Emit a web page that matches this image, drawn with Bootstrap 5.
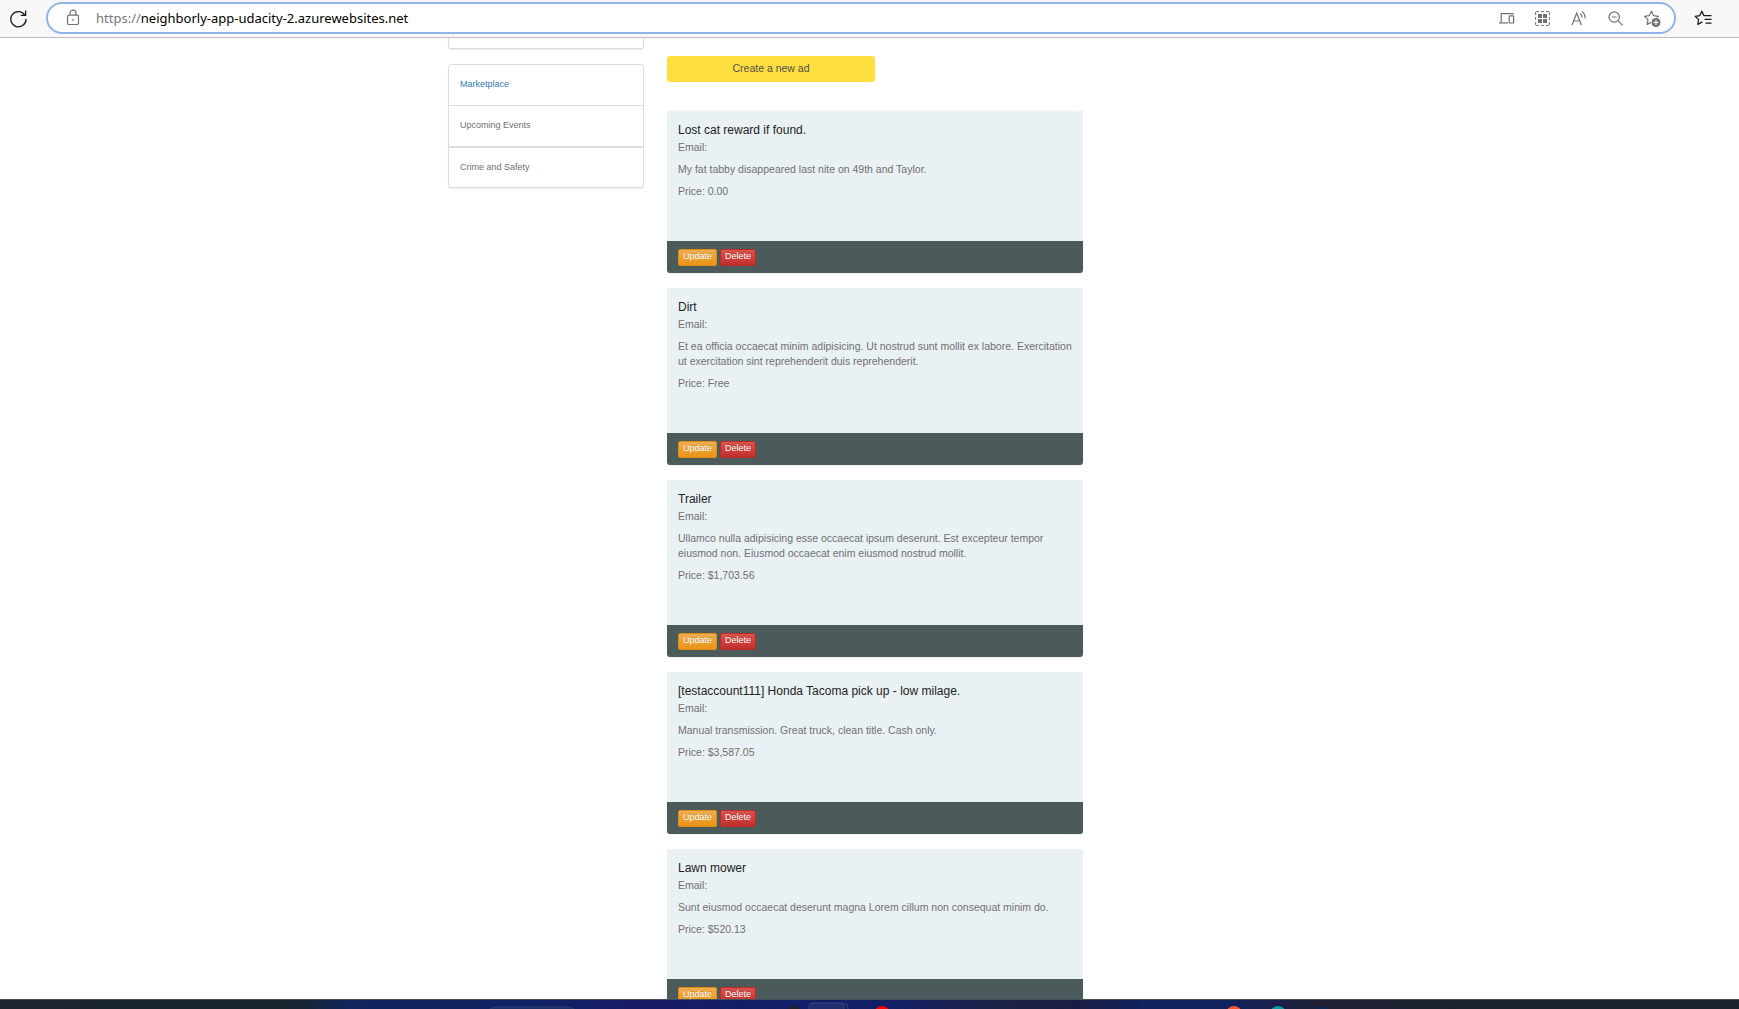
<!DOCTYPE html>
<html lang="en">
<head>
<meta charset="utf-8">
<meta name="viewport" content="width=device-width, initial-scale=1">
<title>Neighborly</title>
<link href="https://cdn.jsdelivr.net/npm/bootstrap@5.3.0/dist/css/bootstrap.min.css" rel="stylesheet">
<style>
body{font:12px/15px "Liberation Sans",Arial,sans-serif;color:#707070;background:#fff}
.toolbar{height:38px;background:#f7f7f7;border-bottom:1px solid #bdbdbd;padding:2px 26px 3px 8px}
.icon-btn{border:0;background:none;padding:0;line-height:0;color:#707070}
.icon-btn.dark{color:#1b1b1b}
.address{height:32px;border:2px solid #8fb3ea;border-radius:16px;background:#fff;padding:0 12px 0 17px;margin-left:18px;margin-right:18px}
.address-url{font:13px/20px "Noto Sans","Open Sans",sans-serif;color:#000;margin-left:15px}
.address-url span{color:#767676}
.address-tools{gap:19px}
.viewport-pane{min-height:0}
.page-wrap{max-width:843px;gap:23px}
.side{width:196px}
.main-col{width:416px;padding-top:18px}
.side-group{border:1px solid #ddd;border-radius:3px;box-shadow:0 1px 1px rgba(0,0,0,.08)}
.side-prev{height:11px;border-top:0;border-radius:0 0 3px 3px;margin-bottom:15px}
.side-link{display:block;height:41px;padding:12px 11px;font-size:9px;line-height:15px;color:#707070;text-decoration:none;border-bottom:1px solid #ddd}
.side-link.active{color:#337ab7}
.side-link:nth-child(2){height:42px;border-bottom-width:2px}
.side-link:last-child{height:39px;border-bottom:0}
.btn-create{height:26px;width:50%;border:0;border-radius:3px;background:#ffde3f;color:#4f4f4f;line-height:15px;padding:0 0 2px;margin-bottom:29px}
.ad{margin-bottom:15px;border-radius:0 0 3px 3px;overflow:hidden;box-shadow:0 1px 1px rgba(0,0,0,.06)}
.ad-body{background:#e9f1f5;padding:11px 10px 42px 11px}
.ad-body h2{font-size:12px;line-height:16px;margin:0 0 2px;color:#222;font-weight:400}
.ad-body p{margin:0 0 7px}
.ad-body p:last-child{margin:0}
.ad-foot{background:#4b5b5b;height:32px;padding:8px 11px;gap:3px}
.ad-foot button{height:17px;font-size:9px;line-height:11px;border-radius:2px;padding:0 4px 2px;color:#fff;text-shadow:0 -1px 0 rgba(0,0,0,.2)}
.b-upd{background:linear-gradient(#f0ad4e,#eb9316);border:1px solid #e38d13}
.b-del{background:linear-gradient(#d9534f,#c12e2a);border:1px solid #b92c28}
.taskbar{height:10px;border-top:1px solid #42505e;background:linear-gradient(90deg,#1c2430 0,#17242f 17%,#10265c 20%,#102365 31%,#181a68 37%,#101f68 45%,#111f66 51%,#1b2145 57%,#1b1c45 62%,#10225f 66%,#10225c 71%,#201f33 76%,#19222e 84%,#1c222c)}
.taskbar svg{display:block;width:100%}
</style>
<script src="https://cdn.jsdelivr.net/npm/bootstrap@5.3.0/dist/js/bootstrap.bundle.min.js"></script>
</head>
<body class="vh-100 d-flex flex-column overflow-hidden">
<header class="toolbar d-flex align-items-center flex-shrink-0">
  <button class="icon-btn dark" aria-label="Refresh"><svg width="20" height="20" viewBox="0 0 20 20" fill="none" stroke="currentColor" stroke-width="1.3"><path d="M16.7 7A7.6 7.6 0 1 0 18 11M17.6 2.5V7.3H12.8"/></svg></button>
  <div class="address d-flex align-items-center flex-grow-1">
    <button class="icon-btn" aria-label="Site information"><svg width="16" height="18" viewBox="0 0 16 18" fill="none" stroke="currentColor" stroke-width="1.2"><rect x="2.5" y="6.2" width="11" height="9.300" rx="1.6"/><path d="M5 6V4.2a3 3 0 0 1 6 0V6"/><circle cx="8" cy="10.800" r=".7" fill="currentColor" stroke-width=".5"/></svg></button>
    <div class="address-url flex-grow-1"><span>https://</span>neighborly-app-udacity-2.azurewebsites.net</div>
    <div class="address-tools d-flex align-items-center">
      <button class="icon-btn" aria-label="Devices"><svg width="17" height="17" viewBox="0 0 17 17" fill="none" stroke="currentColor" stroke-width="1.2"><path d="M15 4.5V3.6H3.2V12M1 12.8h9"/><rect x="11.2" y="5.8" width="4.4" height="7.2" rx=".6"/></svg></button>
      <button class="icon-btn" aria-label="Apps"><svg width="17" height="17" viewBox="0 0 17 17" fill="none" stroke="currentColor"><path d="M5 1.6H2.4a.8.8 0 0 0-.8.8V5M12 1.6h2.6a.8.8 0 0 1 .8.8V5M5 15.4H2.4a.8.8 0 0 1-.8-.8V12M12 15.4h2.6a.8.8 0 0 0 .8-.8V12M7 1.6h3M7 15.4h3M1.6 7v3M15.4 7v3"/><path fill="currentColor" stroke="none" d="M4 4h4v4H4zM9 4h4v4H9zM4 9h4v4H4zM9 9h4v4H9z"/></svg></button>
      <button class="icon-btn" aria-label="Read aloud"><svg width="18" height="17" viewBox="0 0 18 17" fill="none" stroke="currentColor" stroke-width="1.2"><path d="M2 15 6.7 3.2 11.4 15M3.6 11h6.2M10 3.5q2 1.3 2 4M12 1.6q3.4 2.4 3 6.8"/></svg></button>
      <button class="icon-btn" aria-label="Zoom out"><svg width="17" height="17" viewBox="0 0 17 17" fill="none" stroke="currentColor" stroke-width="1.2"><circle cx="7.2" cy="7" r="5.2"/><path d="m11 10.8 4.6 4.6M4.8 7h4.8"/></svg></button>
      <button class="icon-btn" aria-label="Add to favorites"><svg width="19" height="19" viewBox="0 0 19 19"><path d="m8.5 2.3 2.1 4.4 4.8.7-3.5 3.3.8 4.6-4.2-2.2-4.3 2.3.8-4.8L1.5 7.400l4.800-.7z" fill="none" stroke="currentColor" stroke-width="1.200" stroke-linejoin="round"/><circle cx="13" cy="13.500" r="5.300" fill="#fff"/><circle cx="13" cy="13.500" r="4.500" fill="currentColor"/><path d="M13 11v5M10.500 13.500h5" stroke="#fff" stroke-width="1.200"/></svg></button>
    </div>
  </div>
  <button class="icon-btn dark" aria-label="Favorites"><svg width="19" height="18" viewBox="0 0 19 18" fill="none" stroke="currentColor" stroke-width="1.300" stroke-linejoin="round"><path d="M11.500 6.600H9.900L7.800 2.300 5.800 6.600l-4.600.7 3.400 3.300-.8 4.700 4.600-2.400M11.500 6.600h6M10.500 10.400h7M11.500 14.200h6"/></svg></button>
</header>
<div class="viewport-pane flex-grow-1 overflow-hidden">
  <div class="page-wrap d-flex align-items-start mx-auto">
    <nav class="side flex-shrink-0" aria-label="Sections">
      <div class="side-group side-prev"></div>
      <div class="side-group">
        <a class="side-link active" href="#">Marketplace</a>
        <a class="side-link" href="#">Upcoming Events</a>
        <a class="side-link" href="#">Crime and Safety</a>
      </div>
    </nav>
    <main class="main-col">
      <button class="btn-create d-block"><span class="small">Create a new ad</span></button>
      <article class="ad">
        <div class="ad-body"><h2>Lost cat reward if found.</h2><p class="small">Email:</p><p class="small">My fat tabby disappeared last nite on 49th and Taylor.</p><p class="small">Price: 0.00</p></div>
        <div class="ad-foot d-flex"><button class="b-upd">Update</button><button class="b-del">Delete</button></div>
      </article>
      <article class="ad">
        <div class="ad-body"><h2>Dirt</h2><p class="small">Email:</p><p class="small">Et ea officia occaecat minim adipisicing. Ut nostrud sunt mollit ex labore. Exercitation ut exercitation sint reprehenderit duis reprehenderit.</p><p class="small">Price: Free</p></div>
        <div class="ad-foot d-flex"><button class="b-upd">Update</button><button class="b-del">Delete</button></div>
      </article>
      <article class="ad">
        <div class="ad-body"><h2>Trailer</h2><p class="small">Email:</p><p class="small">Ullamco nulla adipisicing esse occaecat ipsum deserunt. Est excepteur tempor eiusmod non. Eiusmod occaecat enim eiusmod nostrud mollit.</p><p class="small">Price: $1,703.56</p></div>
        <div class="ad-foot d-flex"><button class="b-upd">Update</button><button class="b-del">Delete</button></div>
      </article>
      <article class="ad">
        <div class="ad-body"><h2>[testaccount111] Honda Tacoma pick up - low milage.</h2><p class="small">Email:</p><p class="small">Manual transmission. Great truck, clean title. Cash only.</p><p class="small">Price: $3,587.05</p></div>
        <div class="ad-foot d-flex"><button class="b-upd">Update</button><button class="b-del">Delete</button></div>
      </article>
      <article class="ad">
        <div class="ad-body"><h2>Lawn mower</h2><p class="small">Email:</p><p class="small">Sunt eiusmod occaecat deserunt magna Lorem cillum non consequat minim do.</p><p class="small">Price: $520.13</p></div>
        <div class="ad-foot d-flex"><button class="b-upd">Update</button><button class="b-del">Delete</button></div>
      </article>
    </main>
  </div>
</div>
<footer class="taskbar flex-shrink-0 overflow-hidden">
  <svg height="9" viewBox="0 0 1739 9" preserveAspectRatio="xMidYMin slice"><path d="M490 9q4-2 8-2h68q5 0 8 2" fill="#1d3068" stroke="#2c3d73"/><circle cx="794" cy="14" r="8" fill="#20222b"/><path d="M809 9V6q0-3 4-3h27q4 0 4 3v3M844 3q4 0 4 6" fill="#20306c" stroke="#38467f"/><circle cx="882" cy="14" r="8" fill="#f00"/><circle cx="1234" cy="14" r="8" fill="#f9552b"/><circle cx="1278" cy="14" r="8" fill="#0b99a0"/><circle cx="1322" cy="14" r="8" fill="#0b2750"/></svg>
</footer>
</body>
</html>
